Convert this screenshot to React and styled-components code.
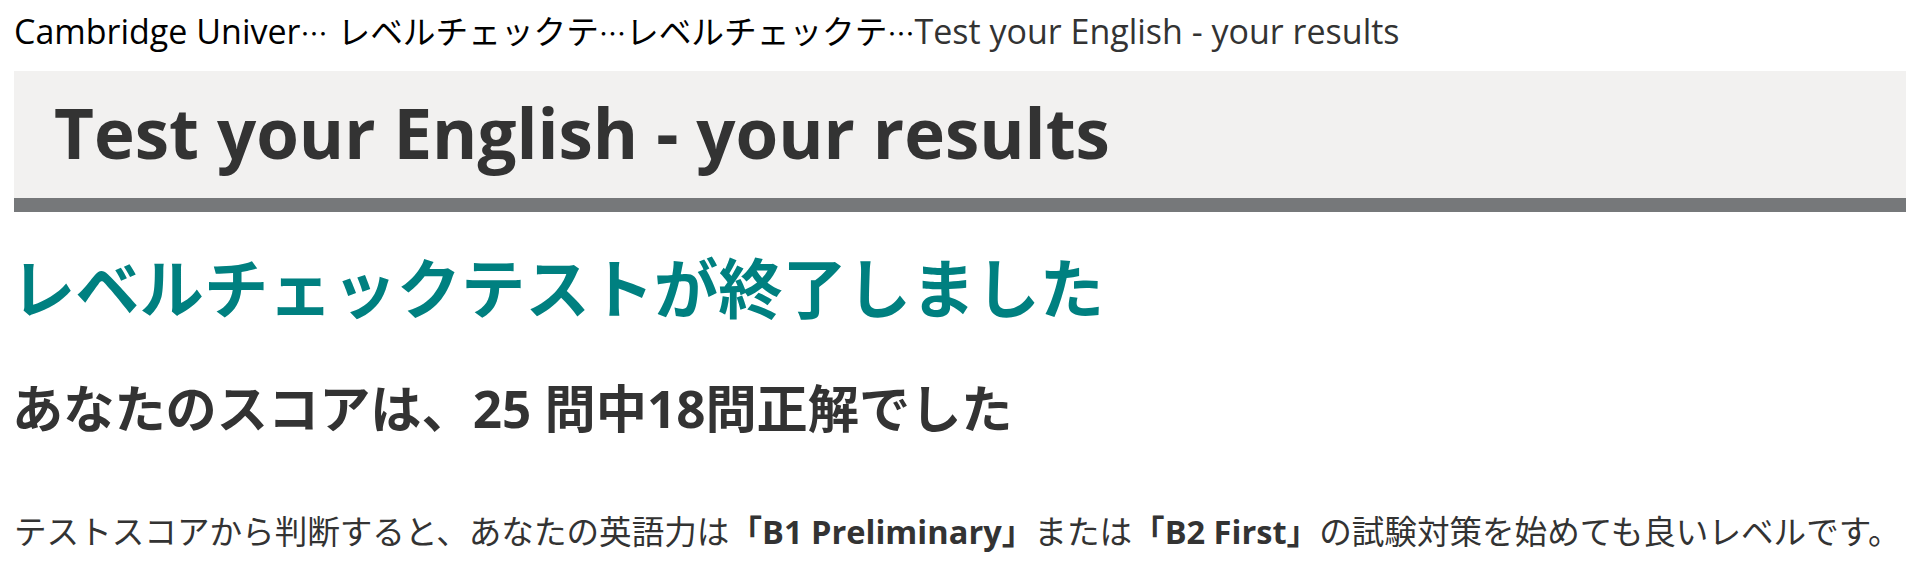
import React from 'react';
import styled, { createGlobalStyle } from 'styled-components';

const GlobalStyle = createGlobalStyle`
  html, body {
    margin: 0;
    padding: 0;
    background: #ffffff;
  }
  body {
    font-family: "Open Sans", "Noto Sans CJK JP", sans-serif;
    color: #333333;
    overflow: hidden;
  }
  * { box-sizing: border-box; }
`;

const Page = styled.div`
  padding-left: 14px;
  min-height: 576px;
`;

const Breadcrumb = styled.nav`
  display: flex;
  align-items: baseline;
  height: 71px;
  padding-top: 14px;
  font-size: 34px;
  line-height: 1;
  white-space: nowrap;
`;

const Crumb = styled.a`
  color: ${(p) => (p.$current ? '#333333' : '#000000')};
  font-size: ${(p) => (p.$cjk ? '32.7px' : '34px')};
  text-decoration: none;
  margin-right: ${(p) => p.$space || 0}px;
`;

const Ellipsis = styled.span`
  font-family: "Noto Sans CJK JP", "DejaVu Sans", sans-serif;
  font-size: 27px;
`;

const Banner = styled.header`
  height: 141px;
  background: #f2f1f0;
  border-bottom: 14px solid #76787a;
  padding: 27px 0 0 40px;
`;

const Title = styled.h1`
  margin: 0;
  font-size: 69px;
  font-weight: 700;
  line-height: 1;
  color: #333333;
`;

const Content = styled.main`
  display: flex;
  flex-direction: column;
`;

const Lead = styled.h2`
  margin: 44px 0 0 -3px;
  font-size: 64.3px;
  font-weight: 700;
  line-height: 1;
  color: #008080;
`;

const Score = styled.h3`
  margin: 63px 0 0 -2px;
  font-size: 51.2px;
  font-weight: 700;
  line-height: 1;
  color: #333333;
`;

const Text = styled.p`
  margin: 81px 0 0;
  font-size: 32.6px;
  font-weight: 400;
  line-height: 1;
  color: #333333;
  white-space: nowrap;
`;

const Strong = styled.strong`
  font-weight: 700;
`;

const crumbs = [
  { label: 'Cambridge Univer', truncated: true, space: 10 },
  { label: 'レベルチェックテ', truncated: true, cjk: true, space: 0 },
  { label: 'レベルチェックテ', truncated: true, cjk: true, space: 0 },
  { label: 'Test your English - your results', current: true },
];

export default function App() {
  return (
    <>
      <GlobalStyle />
      <Page>
        <Breadcrumb>
          {crumbs.map((c, i) => (
            <Crumb
              key={i}
              href="#"
              $current={c.current}
              $cjk={c.cjk}
              $space={c.space}
            >
              {c.label}
              {c.truncated && <Ellipsis lang="ja">⋯</Ellipsis>}
            </Crumb>
          ))}
        </Breadcrumb>
        <Banner>
          <Title>Test your English - your results</Title>
        </Banner>
        <Content>
          <Lead>レベルチェックテストが終了しました</Lead>
          <Score>あなたのスコアは、25 問中18問正解でした</Score>
          <Text>
            テストスコアから判断すると、あなたの英語力は
            <Strong>「B1 Preliminary」</Strong>
            または
            <Strong>「B2 First」</Strong>
            の試験対策を始めても良いレベルです。
          </Text>
        </Content>
      </Page>
    </>
  );
}
